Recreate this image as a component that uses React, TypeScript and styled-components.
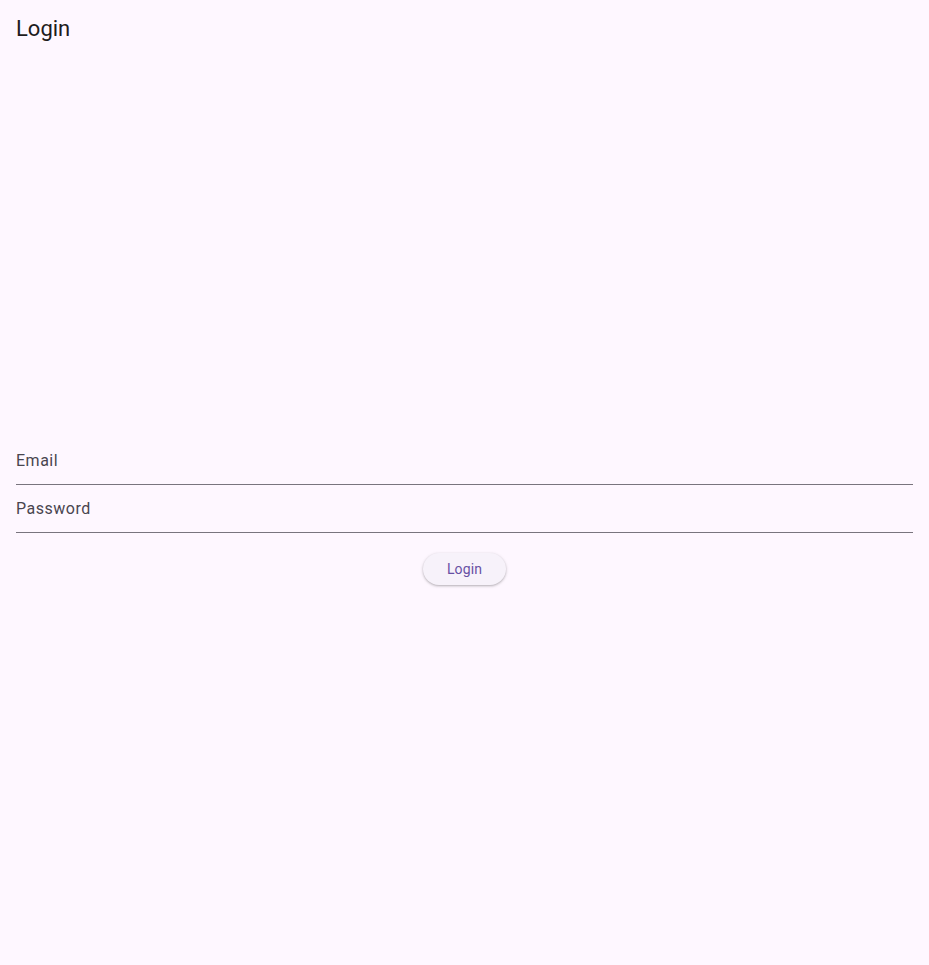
import React from "react";
import styled, { createGlobalStyle } from "styled-components";

const GlobalStyle = createGlobalStyle`
  html, body, #root {
    margin: 0;
    height: 100%;
  }
  body {
    background: #fef7ff;
    font-family: Roboto, "Liberation Sans", sans-serif;
    color: #1d1b20;
  }
`;

const Page = styled.div`
  display: flex;
  flex-direction: column;
  height: 100%;
`;

const AppBar = styled.header`
  height: 56px;
  flex-shrink: 0;
  display: flex;
  align-items: center;
  padding: 0 16px;
`;

const Title = styled.h1`
  margin: 0;
  font-size: 22px;
  font-weight: 400;
  color: #1d1b20;
`;

const Body = styled.main`
  flex: 1;
  display: flex;
  flex-direction: column;
  justify-content: center;
  padding: 0 16px;
`;

const Field = styled.label`
  height: 48px;
  box-sizing: border-box;
  display: flex;
  align-items: center;
  border-bottom: 1px solid #79747e;
  font-size: 16px;
  letter-spacing: 0.5px;
  color: #49454f;
  cursor: text;
`;

const Actions = styled.div`
  display: flex;
  justify-content: center;
  margin-top: 20px;
`;

const Button = styled.button`
  height: 32px;
  padding: 0 24px;
  border: none;
  border-radius: 16px;
  background: #f7f2fa;
  color: #6750a4;
  font-family: Roboto, "Liberation Sans", sans-serif;
  font-size: 14px;
  font-weight: 400;
  letter-spacing: 0.1px;
  box-shadow: 0 1px 2px rgba(0, 0, 0, 0.2), 0 1px 3px 1px rgba(0, 0, 0, 0.08);
  cursor: pointer;
`;

export default function App() {
  return (
    <>
      <GlobalStyle />
      <Page>
        <AppBar>
          <Title>Login</Title>
        </AppBar>
        <Body>
          <Field>Email</Field>
          <Field>Password</Field>
          <Actions>
            <Button>Login</Button>
          </Actions>
        </Body>
      </Page>
    </>
  );
}
